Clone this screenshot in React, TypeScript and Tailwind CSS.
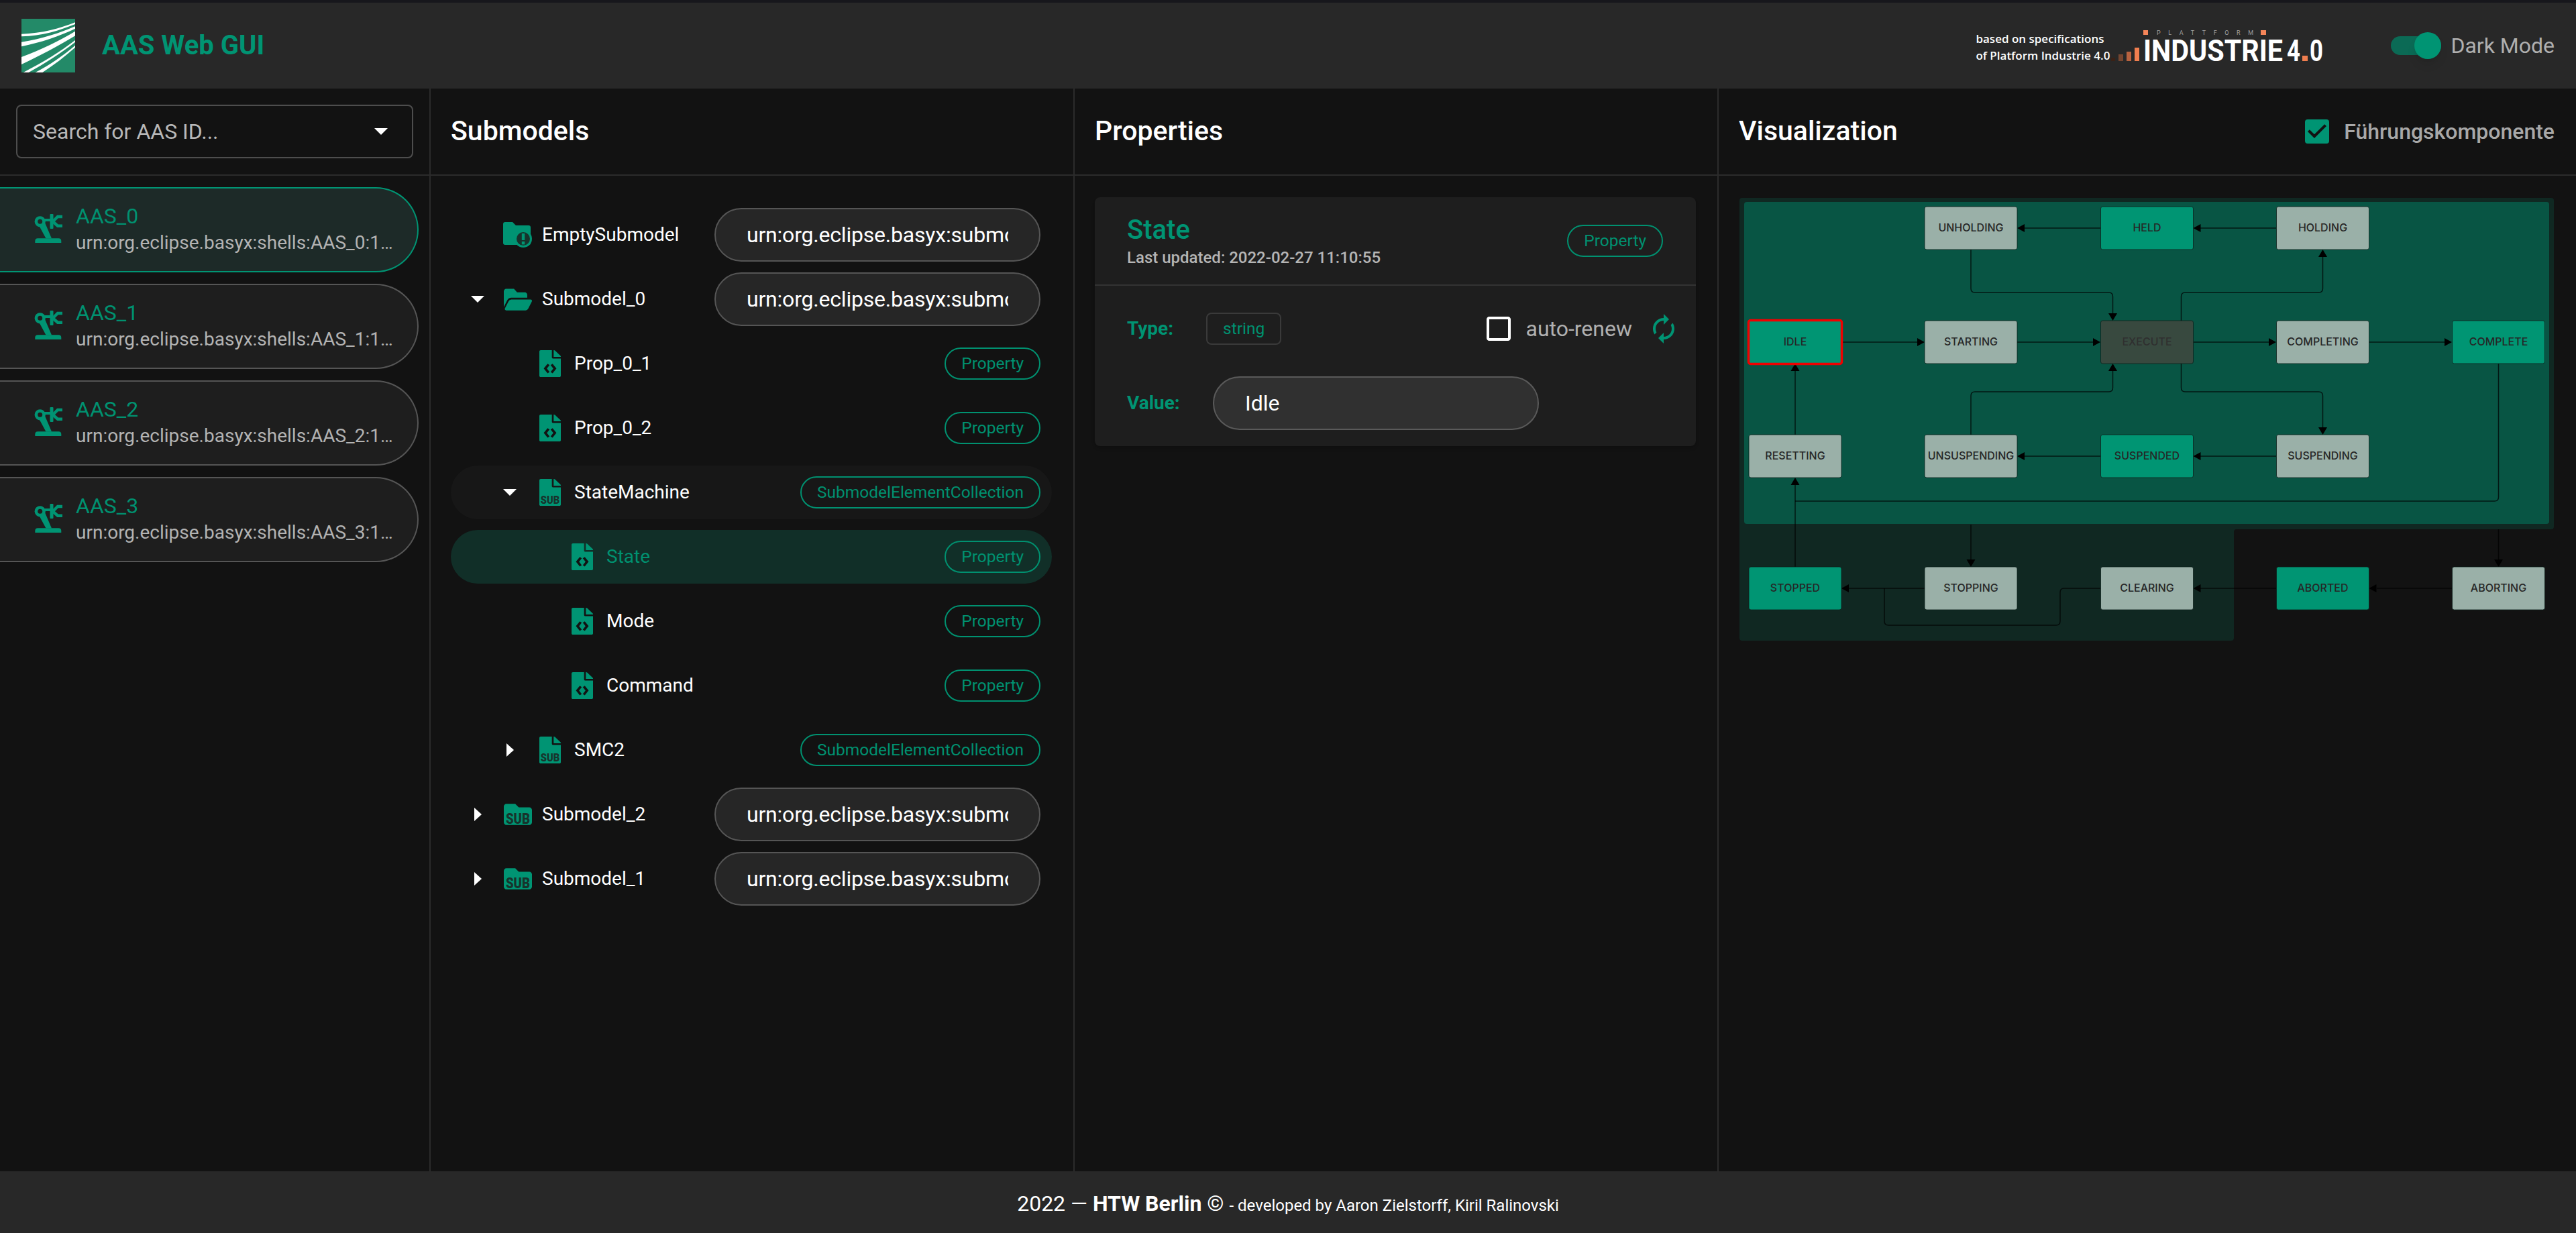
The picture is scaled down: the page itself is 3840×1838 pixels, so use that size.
import { FaFolderOpen } from 'react-icons/fa';
import { MdAutorenew, MdCheckBox, MdCheckBoxOutlineBlank } from 'react-icons/md';

const GREEN = '#009473';

function FraunhoferLogo() {
  return (
    <svg viewBox="0 0 80 80" className="w-20 h-20 shrink-0">
      <rect width="80" height="80" fill="#238a68" />
      <path d="M0 22.7C30 22 58 14 80 5.3V8C58 17 30 26 0 26.3Z" fill="#fff" />
      <path d="M0 34.7C30 30 58 21 80 11.3V14.7C56 26 30 35 0 41.3Z" fill="#fff" />
      <path d="M0 57C30 46 58 32 80 18.7V25.3C56 40 28 55 0 68Z" fill="#fff" />
      <path d="M2.7 80C30 66 58 49 80 32V34.7C58 52 34 67 10.7 80Z" fill="#fff" />
      <path d="M20.7 80C42 69 62 55 80 39.7V42.7C64 57 48 69 31.3 80Z" fill="#fff" />
    </svg>
  );
}

function IndustrieLogo() {
  return (
    <svg viewBox="0 0 322 50" className="w-[322px] h-[50px] shrink-0 overflow-visible [font-family:Roboto,sans-serif]">
      <rect x="0" y="41" width="6" height="5" fill="#3a2116" />
      <rect x="11" y="36" width="7" height="10" fill="#75452f" />
      <rect x="23" y="32" width="7" height="14" fill="#b8623f" />
      <rect x="35" y="26" width="7" height="20" fill="#f07e4f" />
      <rect x="48" y="0" width="7" height="7" fill="#f58559" />
      <rect x="223" y="0" width="8" height="7" fill="#f58559" />
      <text x="68" y="7" fontSize="9" fill="#a0a0a0" textLength="144">PLATTFORM</text>
      <text x="48" y="46" fontSize="44" fontWeight="700" fill="#fff" textLength="208" lengthAdjust="spacingAndGlyphs">INDUSTRIE</text>
      <text x="262" y="46" fontSize="44" fontWeight="700" fill="#fff" textLength="20" lengthAdjust="spacingAndGlyphs">4</text>
      <rect x="285" y="38" width="8" height="8" fill="#f07e4f" />
      <text x="296" y="46" fontSize="44" fontWeight="700" fill="#fff" textLength="20" lengthAdjust="spacingAndGlyphs">0</text>
    </svg>
  );
}

const FILE_PATH =
  'M224 136V0H24C10.7 0 0 10.7 0 24v464c0 13.3 10.7 24 24 24h336c13.3 0 24-10.7 24-24V160H248c-13.2 0-24-10.8-24-24zm160-14.1v6.1H256V0h6.1c6.4 0 12.5 2.5 17 7l97.9 98c4.5 4.5 7 10.6 7 16.9z';
const FOLDER_PATH =
  'M464 128H272l-64-64H48C21.49 64 0 85.49 0 112v288c0 26.51 21.49 48 48 48h416c26.51 0 48-21.49 48-48V176c0-26.51-21.49-48-48-48z';

function RobotIcon() {
  return (
    <svg viewBox="0 0 60 58" className="w-[60px] h-[58px] shrink-0 -mt-[3px] mr-[9px]" fill={GREEN}>
      <circle cx="15.7" cy="18.3" r="5.8" fill="none" stroke={GREEN} strokeWidth="4.6" />
      <path d="M21 16H31" fill="none" stroke={GREEN} strokeWidth="4" />
      <rect x="30.5" y="7" width="5" height="22" rx="1" />
      <path d="M35 18 42 11H49M35 18.5 42 24.7H49" fill="none" stroke={GREEN} strokeWidth="4.4" />
      <path d="M14 24 23 20 33 43.5H24.5Z" />
      <path d="M12.3 43.3H43.3q4 0 4 4V50H8.3V47.3q0-4 4-4Z" />
    </svg>
  );
}

function FileCodeIcon() {
  return (
    <svg viewBox="0 0 384 512" preserveAspectRatio="none" className="w-8 h-10 shrink-0">
      <path d={FILE_PATH} fill={GREEN} />
      <path d="M165 272 106 350 165 428M219 272 278 350 219 428" fill="none" stroke="#121212" strokeWidth="44" />
    </svg>
  );
}

function FileSubIcon() {
  return (
    <svg viewBox="0 0 384 512" preserveAspectRatio="none" className="w-8 h-10 shrink-0">
      <path d={FILE_PATH} fill={GREEN} />
      <text x="192" y="478" textAnchor="middle" fontSize="220" fontWeight="900" fill="#17332c" textLength="340" lengthAdjust="spacingAndGlyphs" className="[font-family:Roboto,sans-serif]">SUB</text>
    </svg>
  );
}

function FolderSubIcon() {
  return (
    <svg viewBox="0 64 512 384" className="w-[42px] h-8 shrink-0">
      <path d={FOLDER_PATH} fill={GREEN} />
      <text x="256" y="424" textAnchor="middle" fontSize="260" fontWeight="900" fill="#17332c" textLength="440" lengthAdjust="spacingAndGlyphs" className="[font-family:Roboto,sans-serif]">SUB</text>
    </svg>
  );
}

function FolderAlertIcon() {
  return (
    <svg viewBox="0 0 44 38" className="w-11 h-[38px] shrink-0">
      <path d="M3 0h11l5 5h19c2 0 3 1 3 3v24c0 1-1 2-3 2H3c-2 0-3-1-3-3V3c0-2 1-3 3-3Z" fill={GREEN} />
      <circle cx="30" cy="25" r="13" fill={GREEN} />
      <circle cx="30" cy="25" r="10" fill="#17332c" />
      <rect x="27.8" y="17" width="4.4" height="10" fill={GREEN} />
      <rect x="27.8" y="29" width="4.4" height="4.4" fill={GREEN} />
    </svg>
  );
}

function Chip({ label }: { label: string }) {
  return (
    <span className="ml-auto h-12 shrink-0 rounded-3xl border-2 border-[#009170] px-[23px] flex items-center text-[24.5px] text-[#009170]">
      {label}
    </span>
  );
}

function UrnField() {
  return (
    <input
      readOnly
      value="urn:org.eclipse.basyx:submodels:0"
      className="ml-auto h-20 w-[486px] shrink-0 rounded-[40px] border-2 border-[#555] bg-[#262626] px-[46px] text-[32px] tracking-[-0.2px] text-white outline-none"
    />
  );
}

type Row = {
  level: 1 | 2 | 3;
  label: string;
  caret?: 'down' | 'right';
  icon: React.ReactNode;
  chip?: string;
  urn?: boolean;
  state?: 'selected' | 'hover';
};

const fileCode = <FileCodeIcon />;
const openFolder = <FaFolderOpen preserveAspectRatio="none" className="w-[42px] h-[43px] shrink-0 text-[#009473]" />;

const rows: Row[] = [
  { level: 1, label: 'EmptySubmodel', icon: <FolderAlertIcon />, urn: true },
  { level: 1, label: 'Submodel_0', caret: 'down', icon: openFolder, urn: true },
  { level: 2, label: 'Prop_0_1', icon: fileCode, chip: 'Property' },
  { level: 2, label: 'Prop_0_2', icon: fileCode, chip: 'Property' },
  { level: 2, label: 'StateMachine', caret: 'down', icon: <FileSubIcon />, chip: 'SubmodelElementCollection', state: 'hover' },
  { level: 3, label: 'State', icon: fileCode, chip: 'Property', state: 'selected' },
  { level: 3, label: 'Mode', icon: fileCode, chip: 'Property' },
  { level: 3, label: 'Command', icon: fileCode, chip: 'Property' },
  { level: 2, label: 'SMC2', caret: 'right', icon: <FileSubIcon />, chip: 'SubmodelElementCollection' },
  { level: 1, label: 'Submodel_2', caret: 'right', icon: <FolderSubIcon />, urn: true },
  { level: 1, label: 'Submodel_1', caret: 'right', icon: <FolderSubIcon />, urn: true },
];

function TreeRow({ row }: { row: Row }) {
  const indent = row.level === 1 ? 'pl-4' : row.level === 2 ? 'pl-16' : 'pl-28';
  const bg =
    row.state === 'selected' ? 'bg-[#112f28]' : row.state === 'hover' ? 'bg-[#171717]' : '';
  return (
    <div className={`flex items-center h-20 rounded-[40px] pr-[17px] ${indent} ${bg}`}>
      <div className="w-12 h-12 shrink-0 flex items-center justify-center">
        {row.caret === 'down' && (
          <div className="w-0 h-0 border-x-[10px] border-x-transparent border-t-[10px] border-t-white" />
        )}
        {row.caret === 'right' && (
          <div className="w-0 h-0 border-y-[10px] border-y-transparent border-l-[11px] border-l-white" />
        )}
      </div>
      <div className="w-10 ml-4 shrink-0 flex items-center justify-center">{row.icon}</div>
      <span className={`ml-4 text-[28px] ${row.state === 'selected' ? 'text-[#009170]' : 'text-white'}`}>
        {row.label}
      </span>
      {row.chip && <Chip label={row.chip} />}
      {row.urn && <UrnField />}
    </div>
  );
}

function AasItem({ name, urn, active }: { name: string; urn: string; active?: boolean }) {
  return (
    <div
      className={`flex items-center h-[127px] w-[624px] rounded-r-[64px] border-2 border-l-0 pl-[44px] pr-6 ${
        active ? 'border-[#009473] bg-[#1d2a28]' : 'border-[#555] bg-[#1e1e1e]'
      }`}
    >
      <RobotIcon />
      <div className="min-w-0 -mt-[2px]">
        <div className="text-[32px] leading-[40px] text-[#009170]">{name}</div>
        <div className="text-[28px] leading-[40px] text-[#b3b3b3] truncate w-[474px]">{urn}</div>
      </div>
    </div>
  );
}

type Node = { x: number; y: number; label: string; kind?: 'green' | 'dark' };

const CX = [2607, 2869, 3131.5, 3393.5, 3655.5];
const RY = [308, 478, 648, 845];

const nodes: Node[] = [
  { x: CX[1], y: RY[0], label: 'UNHOLDING' },
  { x: CX[2], y: RY[0], label: 'HELD', kind: 'green' },
  { x: CX[3], y: RY[0], label: 'HOLDING' },
  { x: CX[0], y: RY[1], label: 'IDLE', kind: 'green' },
  { x: CX[1], y: RY[1], label: 'STARTING' },
  { x: CX[2], y: RY[1], label: 'EXECUTE', kind: 'dark' },
  { x: CX[3], y: RY[1], label: 'COMPLETING' },
  { x: CX[4], y: RY[1], label: 'COMPLETE', kind: 'green' },
  { x: CX[0], y: RY[2], label: 'RESETTING' },
  { x: CX[1], y: RY[2], label: 'UNSUSPENDING' },
  { x: CX[2], y: RY[2], label: 'SUSPENDED', kind: 'green' },
  { x: CX[3], y: RY[2], label: 'SUSPENDING' },
  { x: CX[0], y: RY[3], label: 'STOPPED', kind: 'green' },
  { x: CX[1], y: RY[3], label: 'STOPPING' },
  { x: CX[2], y: RY[3], label: 'CLEARING' },
  { x: CX[3], y: RY[3], label: 'ABORTED', kind: 'green' },
  { x: CX[4], y: RY[3], label: 'ABORTING' },
];

const edges = [
  'M3131 340H3018',
  'M3393 340H3280',
  'M2938 372V430q0 6 6 6H3143.5q6 0 6 6V467',
  'M3251.5 478V442q0-6 6-6H3456.5q6 0 6-6V383',
  'M2745 510H2858',
  'M3007 510H3120',
  'M3270 510H3382',
  'M3532 510H3644',
  'M2676 648V553',
  'M2938 648V590q0-6 6-6H3143.5q6 0 6-6V553',
  'M3251.5 542V578q0 6 6 6H3456.5q6 0 6 6V637',
  'M3393 680H3280',
  'M3131 680H3018',
  'M3724.5 542V741q0 6-6 6H2676',
  'M2676 845V723',
  'M2938 782V834',
  'M3724.5 789V834',
  'M2869 877H2756',
  'M3131 877H3077q-6 0-6 6V926q0 6-6 6H2815q-6 0-6-6V877',
  'M3393 877H3280',
  'M3655 877H3543',
];

const heads = [
  [3007, 340, 'l'], [3269.5, 340, 'l'], [3149.5, 478, 'd'], [3462.5, 372, 'u'],
  [2869, 510, 'r'], [3131, 510, 'r'], [3393, 510, 'r'], [3655, 510, 'r'],
  [2676, 542, 'u'], [3149.5, 542, 'u'], [3462.5, 648, 'd'],
  [3269.5, 680, 'l'], [3007, 680, 'l'], [2676, 712, 'u'],
  [2938, 845, 'd'], [3724.5, 845, 'd'],
  [2745, 877, 'l'], [3269.5, 877, 'l'], [3531.5, 877, 'l'],
] as const;

function headPoints(x: number, y: number, dir: string) {
  if (dir === 'l') return `${x},${y} ${x + 11},${y - 6} ${x + 11},${y + 6}`;
  if (dir === 'r') return `${x},${y} ${x - 11},${y - 6} ${x - 11},${y + 6}`;
  if (dir === 'u') return `${x},${y} ${x - 6.5},${y + 11} ${x + 6.5},${y + 11}`;
  return `${x},${y} ${x - 6.5},${y - 11} ${x + 6.5},${y - 11}`;
}

function StateDiagram() {
  return (
    <svg viewBox="2592 294 1216 670" className="block w-[1216px] h-[670px] [font-family:Inter,sans-serif]">
      <path d="M2597 295H3803q4 0 4 4V785q0 4-4 4H3334q-4 0-4 4V951q0 4-4 4H2597q-4 0-4-4V299q0-4 4-4Z" fill="#102822" />
      <rect x="2600" y="301" width="1200" height="480" rx="4" fill="#085544" />
      {edges.map((d) => (
        <path key={d} d={d} fill="none" stroke="#000" strokeOpacity="0.72" strokeWidth="1.5" />
      ))}
      {heads.map(([x, y, dir]) => (
        <polygon key={`${x}-${y}-${dir}`} points={headPoints(x, y, dir)} fill="#000" />
      ))}
      {nodes.map((n) => (
        <g key={n.label}>
          <rect
            x={n.x}
            y={n.y}
            width="138"
            height="64"
            rx="3"
            fill={n.kind === 'green' ? '#009573' : n.kind === 'dark' ? '#38493f' : '#9ab0a8'}
            stroke="#0d211c"
            strokeOpacity="0.8"
          />
          <text
            x={n.x + 69}
            y={n.y + 37}
            textAnchor="middle"
            fontSize="16"
            fontWeight="500"
            fill={n.kind === 'dark' ? '#2f2f2f' : '#262626'}
          >
            {n.label}
          </text>
        </g>
      ))}
      <rect x="2606.5" y="477.5" width="139" height="65" rx="3" fill="none" stroke="#f00000" strokeWidth="3.5" />
    </svg>
  );
}

function ColumnHeader({ title, children }: { title: string; children?: React.ReactNode }) {
  return (
    <div className="h-[130px] shrink-0 flex items-center justify-between px-8 border-b-2 border-[#2b2b2b]">
      <h2 className="text-[41px] font-medium text-white">{title}</h2>
      {children}
    </div>
  );
}

export default function App() {
  return (
    <div className="w-[3840px] h-[1838px] flex flex-col bg-[#121212] overflow-hidden [font-family:Roboto,sans-serif]">
      <div className="h-1 shrink-0 bg-[#17171c]" />

      <header className="h-[128px] shrink-0 flex items-center bg-[#282828] pl-8 pr-8">
        <FraunhoferLogo />
        <h1 className="ml-10 text-[40px] font-bold text-[#009473]">AAS Web GUI</h1>
        <div className="ml-auto flex items-center">
          <div className="text-[17px] leading-[25px] font-semibold text-white [font-family:'Open_Sans',sans-serif] mt-1">
            <div>based on specifications</div>
            <div>of Platform Industrie 4.0</div>
          </div>
          <div className="ml-[2px] mt-1">
            <IndustrieLogo />
          </div>
          <div className="ml-[95px] relative w-[75px] h-7 rounded-full bg-[#0b6a55]">
            <div className="absolute -top-[6px] right-0 w-10 h-10 rounded-full bg-[#009473] shadow-lg" />
          </div>
          <span className="ml-[14px] text-[32px] text-[#b0b0b0]">Dark Mode</span>
        </div>
      </header>

      <main className="flex-1 min-h-0 flex">
        <aside className="w-[640px] shrink-0 flex flex-col">
          <div className="h-[130px] shrink-0 flex items-center px-6 border-b-2 border-[#2b2b2b]">
            <div className="h-20 w-full rounded-lg border-2 border-[#4d4d4d] flex items-center justify-between pl-[23px] pr-9">
              <span className="text-[32px] text-[#b8b8b8]">Search for AAS ID...</span>
              <div className="w-0 h-0 border-x-[10px] border-x-transparent border-t-[10px] border-t-white" />
            </div>
          </div>
          <div className="pt-[17px] flex flex-col gap-[17px]">
            <AasItem name="AAS_0" urn="urn:org.eclipse.basyx:shells:AAS_0:1.0.0" active />
            <AasItem name="AAS_1" urn="urn:org.eclipse.basyx:shells:AAS_1:1.0.0" />
            <AasItem name="AAS_2" urn="urn:org.eclipse.basyx:shells:AAS_2:1.0.0" />
            <AasItem name="AAS_3" urn="urn:org.eclipse.basyx:shells:AAS_3:1.0.0" />
          </div>
        </aside>

        <section className="w-[960px] shrink-0 shadow-[inset_2px_0_0_#2b2b2b] flex flex-col">
          <ColumnHeader title="Submodels" />
          <div className="pt-12 px-8 flex flex-col gap-4">
            {rows.map((row) => (
              <TreeRow key={row.label} row={row} />
            ))}
          </div>
        </section>

        <section className="w-[960px] shrink-0 shadow-[inset_2px_0_0_#2b2b2b] flex flex-col">
          <ColumnHeader title="Properties" />
          <div className="m-8 rounded-lg bg-[#1e1e1e] shadow-md">
            <div className="h-[132px] flex items-center justify-between pl-12 pr-[49px] border-b-2 border-[#333]">
              <div>
                <div className="text-[40px] leading-[50px] font-medium text-[#009473]">State</div>
                <div className="text-[24px] leading-8 font-medium text-[#b5b5b5]">Last updated: 2022-02-27 11:10:55</div>
              </div>
              <span className="h-12 rounded-3xl border-2 border-[#009170] px-[23px] flex items-center text-[24.5px] text-[#009170]">
                Property
              </span>
            </div>
            <div className="px-12 pt-10 pb-6">
              <div className="flex items-center h-12">
                <span className="w-[118px] text-[28px] font-bold text-[#009473]">Type:</span>
                <span className="h-12 px-[23px] rounded-lg border-2 border-[#3a3a3a] flex items-center text-[24.5px] text-[#009170]">string</span>
                <MdCheckBoxOutlineBlank className="ml-auto w-12 h-12 text-white" />
                <span className="ml-[17px] text-[32px] text-[#b0b0b0]">auto-renew</span>
                <MdAutorenew className="ml-[23px] -mr-6 w-12 h-12 text-[#009473]" />
              </div>
              <div className="flex items-center mt-[47px]">
                <span className="w-32 text-[28px] font-bold text-[#009473]">Value:</span>
                <input
                  readOnly
                  value="Idle"
                  className="h-20 w-[486px] rounded-[40px] border-2 border-[#5a5a5a] bg-[#303030] px-[46px] text-[32px] text-white outline-none"
                />
              </div>
            </div>
          </div>
        </section>

        <section className="flex-1 min-w-0 shadow-[inset_2px_0_0_#2b2b2b] flex flex-col">
          <ColumnHeader title="Visualization">
            <div className="flex items-center">
              <MdCheckBox className="w-12 h-12 text-[#009473]" />
              <span className="ml-4 text-[32px] font-medium text-[#a8a8a8]">Führungskomponente</span>
            </div>
          </ColumnHeader>
          <div className="pl-8 pt-8">
            <StateDiagram />
          </div>
        </section>
      </main>

      <footer className="h-[92px] shrink-0 bg-[#282828] flex items-baseline justify-center pt-6 text-white">
        <span className="text-[32px]">
          2022 — <b className="font-bold">HTW Berlin</b> ©
        </span>
        <span className="ml-2 text-[24px]">- developed by Aaron Zielstorff, Kiril Ralinovski</span>
      </footer>
    </div>
  );
}
